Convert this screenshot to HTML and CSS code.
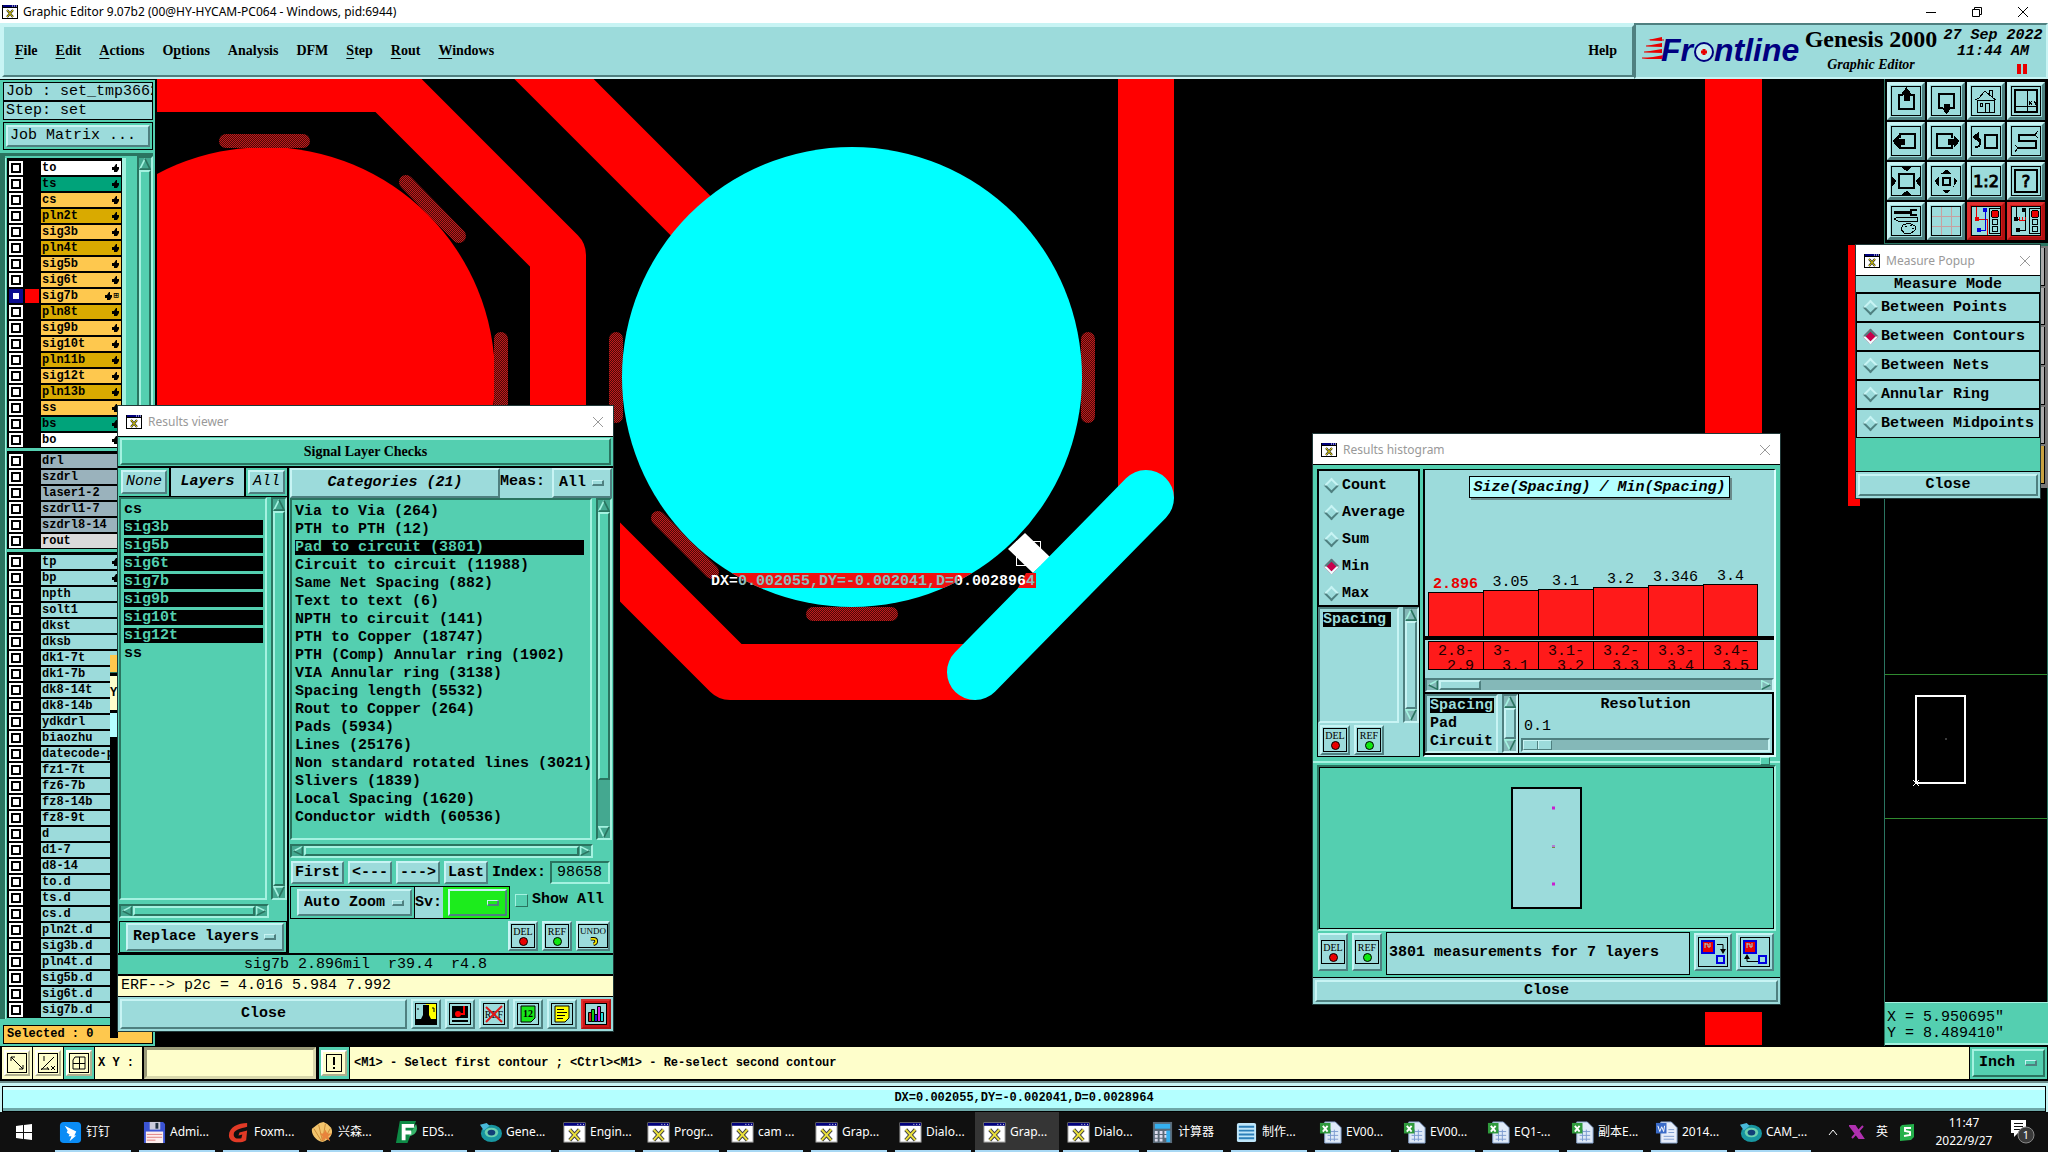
FILE: index.html
```html
<!DOCTYPE html>
<html lang="en">
<head>
    <title>Graphic Editor 9.07b2</title>
    <meta charset="utf-8">
    <link rel="stylesheet" href="styles.css">
</head>
<body>
    <!-- shared icons -->
    <svg class="defs" width="0" height="0">
        <symbol id="i-app" viewBox="0 0 16 14">
            <rect width="16" height="14" fill="#000"/><rect x="1" y="3" width="14" height="10" fill="#fff"/>
            <rect x="1" y="0" width="14" height="2" fill="#00007c"/><path d="M10 1h1M12 1h1M14 1h1" stroke="#fff"/>
            <path d="M5 5l6 7M11 5l-6 7" stroke="#222" stroke-width="2"/><path d="M5 5l6 7M11 5l-6 7" stroke="#f0e000"/>
        </symbol>
        <symbol id="i-x" viewBox="0 0 10 10"><path d="M0 0l10 10M10 0L0 10" fill="none" stroke="currentColor"/></symbol>
        <symbol id="i-hand" viewBox="0 0 7 8"><path d="M4 0h1v3h2v2L5 8H2V6H0V3h2z"/></symbol>
        <symbol id="i-up" viewBox="0 0 14 14"><path d="M7 1L1 13h12z" class="tri"/><path d="M1 13L7 1" class="lit"/><path d="M7 1l6 12H1" class="dim"/></symbol>
        <symbol id="i-down" viewBox="0 0 14 14"><path d="M7 13L1 1h12z" class="tri"/><path d="M7 13L1 1h12" class="lit"/><path d="M7 13L13 1" class="dim"/></symbol>
        <symbol id="i-left" viewBox="0 0 14 14"><path d="M1 7L13 1v12z" class="tri"/><path d="M1 7L13 1" class="lit"/><path d="M1 7l12 6V1" class="dim"/></symbol>
        <symbol id="i-right" viewBox="0 0 14 14"><path d="M13 7L1 1v12z" class="tri"/><path d="M13 7L1 1v12" class="lit"/><path d="M13 7L1 13" class="dim"/></symbol>
        <symbol id="t-x" viewBox="0 0 24 24"><rect x="1" y="2" width="22" height="20" fill="#fff" stroke="#999"/><rect x="1" y="2" width="22" height="3" fill="#00007c"/><path d="M15 3.500h1M18 3.500h1M21 3.500h1" stroke="#fff"/><path d="M7 9l10 11M17 9L7 20" stroke="#444" stroke-width="4"/><path d="M7 9l10 11M17 9L7 20" stroke="#ece23a" stroke-width="2"/></symbol>
        <symbol id="t-ding" viewBox="0 0 24 24"><rect x="1" y="1" width="22" height="22" rx="4" fill="#0a8cf5"/><path d="M6 5l12 6-2 4h2l-7 6 2-5h-3l1-2-3-2 1-2z" fill="#fff"/></symbol>
        <symbol id="t-disk" viewBox="0 0 24 24"><path d="M1 1h20l2 2v20H1z" fill="#3b54d4"/><rect x="7" y="1" width="11" height="8" fill="#ccd"/><rect x="13" y="2" width="3" height="6" fill="#234"/><rect x="3" y="11" width="18" height="12" fill="#fdeeee"/><path d="M4 14h16M4 17h16M4 20h9" stroke="#e08080"/></symbol>
        <symbol id="t-fox" viewBox="0 0 24 24"><path d="M21 2c-9 0-19 4-19 13 0 8 12 9 18 5l1-10-8 2-1 3 4-1-1 4c-4 1-8 0-8-4 0-5 7-6 14-8z" fill="#e23a26"/></symbol>
        <symbol id="t-shell" viewBox="0 0 24 24"><path d="M12 22C4 20 0 13 1 8l4-3 4-3 4-1 4 2 4 4c3 6-1 12-9 15z" fill="#f2c46c"/><path d="M11 21L3 8M12 21L8 4M12 21l3-18M13 21l7-13" stroke="#c98a35"/><path d="M15 9l2 4h5l-4 3 2 5-5-3-4 3 1-5-3-3h4z" fill="#e8843c"/></symbol>
        <symbol id="t-eds" viewBox="0 0 24 24"><path d="M5 0h17L13 23H1z" fill="#0d8a45"/><path d="M22 3c3 8-2 12-8 13z" fill="#35b56a"/><path d="M9 20V5h11M9 12h8" fill="none" stroke="#fff" stroke-width="4"/></symbol>
        <symbol id="t-gen" viewBox="0 0 24 24"><ellipse cx="13" cy="13" rx="11" ry="9" fill="#1896a0"/><ellipse cx="13" cy="12" rx="7" ry="5" fill="#6bd0b0"/><ellipse cx="13" cy="12" rx="4" ry="3" fill="#123f78"/><path d="M1 4l7-2 3 3-6 5z" fill="#48b8d8"/></symbol>
        <symbol id="t-calc" viewBox="0 0 24 24"><rect x="2" y="1" width="20" height="22" fill="#5a6a78"/><rect x="4" y="3" width="16" height="5" fill="#35b0f0"/><path d="M4 12h3M9 12h3M4 16h3M9 16h3M4 20h3M9 20h3M14 12h3M14 16h3" stroke="#dde" stroke-width="3"/><path d="M18 10v12" stroke="#35b0f0" stroke-width="4"/></symbol>
        <symbol id="t-note" viewBox="0 0 24 24"><rect x="2" y="2" width="20" height="20" rx="2" fill="#bfe6fa"/><path d="M4 6h16M4 10h16M4 14h16M4 18h16" stroke="#2c7fb8" stroke-width="2"/></symbol>
        <symbol id="t-xls" viewBox="0 0 24 24"><path d="M6 1h11l6 6v16H6z" fill="#dfeaf8" stroke="#8aa6d0"/><path d="M9 11h11M9 15h11M9 19h11M12 9v12M16 9v12" stroke="#7c9cd0"/><rect x="1" y="2" width="11" height="11" fill="#2f9a3c"/><path d="M4 5l5 6M9 5l-5 6" stroke="#fff" stroke-width="2"/></symbol>
        <symbol id="t-doc" viewBox="0 0 24 24"><path d="M6 1h11l6 6v16H6z" fill="#e6edfa" stroke="#8aa6d0"/><path d="M14 9h6M14 12h6M9 16h11M9 19h11" stroke="#7c9cd0"/><rect x="1" y="2" width="11" height="11" fill="#3a6bc8"/><path d="M3 5l2 6 2-5 2 5 1-6" fill="none" stroke="#fff"/></symbol>
    </svg>

    <header class="titlebar">
        <svg class="app-icon"><use href="#i-app"/></svg>
        <span>Graphic Editor 9.07b2 (00@HY-HYCAM-PC064 - Windows, pid:6944)</span>
        <div class="win-ctl">
            <button aria-label="Minimize"><svg width="10" height="10"><path d="M0 5.500h10" stroke="#000"/></svg></button>
            <button aria-label="Restore"><svg width="10" height="10" fill="none" stroke="#000"><path d="M.5 2.500h7v7h-7zM2.500 2.500v-2h7v7h-2"/></svg></button>
            <button aria-label="Close"><svg width="10" height="10"><use href="#i-x"/></svg></button>
        </div>
    </header>

    <div class="top">
        <nav class="menubar">
            <button><u>F</u>ile</button>
            <button><u>E</u>dit</button>
            <button><u>A</u>ctions</button>
            <button>O<u>p</u>tions</button>
            <button>Analysis</button>
            <button>DFM</button>
            <button><u>S</u>tep</button>
            <button><u>R</u>out</button>
            <button><u>W</u>indows</button>
            <button class="help">Help</button>
        </nav>
        <div class="brand">
            <svg class="logo" width="160" height="40" viewBox="0 0 160 40">
                <g fill="#e80000"><path d="M6 9l14-3v4zM4 15l16-3v4zM2 21l18-3v4zM0 28l22-4v4z"/></g>
                <path d="M8 9h14M4 15h16M2 21h18M0 27h20" stroke="#e80000"/>
                <text x="19" y="30" class="logo-text">Fr</text>
                <circle cx="62" cy="21" r="9" fill="#c8eeee" stroke="#000080" stroke-width="2"/>
                <path d="M62 18v6M59 21h6" stroke="#e80000" stroke-width="3"/>
                <text x="72" y="30" class="logo-text">ntline</text>
            </svg>
            <div class="product">
                <strong>Genesis 2000</strong>
                <em>Graphic Editor</em>
            </div>
            <div class="clock">
                <span>27 Sep 2022</span>
                <span>11:44 AM</span>
                <svg width="12" height="10"><path d="M3 0v10M9 0v10" stroke="#e80000" stroke-width="4"/></svg>
            </div>
        </div>
    </div>

    <main class="work">
        <aside class="rail">
            <div class="job">Job : set_tmp3662</div>
            <div class="job">Step: set</div>
            <div class="matrix"><button>Job Matrix ...</button></div>
            <div class="layers">
                <div class="layer-frame" id="layers"></div>
                <div class="vscroll"><svg><use href="#i-up"/></svg><i></i></div>
            </div>
            <div class="selected">Selected : 0</div>
        </aside>

        <svg class="canvas" viewBox="157 79 1727 967" preserveAspectRatio="xMinYMin slice">
            <defs>
                <pattern id="hatch" width="2" height="2" patternUnits="userSpaceOnUse"><rect width="2" height="2" fill="#4a0808"/><path d="M0 0h1v1h-1zM1 1h1v1h-1z" fill="#c01c1c"/></pattern>
                <clipPath id="pad"><circle cx="852" cy="377" r="230"/></clipPath>
                <clipPath id="cut"><rect x="620" y="400" width="600" height="400"/></clipPath>
                <linearGradient id="ink" gradientUnits="userSpaceOnUse" x1="711" x2="1036" y1="0" y2="0">
                    <stop offset=".08" stop-color="#fff"/><stop offset=".08" stop-color="#8fbcbc"/>
                    <stop offset=".76" stop-color="#8fbcbc"/><stop offset=".76" stop-color="#fff"/>
                    <stop offset=".97" stop-color="#fff"/><stop offset=".97" stop-color="#8fbcbc"/>
                </linearGradient>
            </defs>
            <g class="trace">
                <polyline points="140,84 387,84 558,255 558,460"/>
                <polyline points="475,0 760,285"/>
                <polyline points="1146,60 1146,498"/>
                <polyline points="560,502 730,672 975,672" clip-path="url(#cut)"/>
            </g>
            <circle cx="265" cy="377" r="230" fill="#f00"/>
            <rect x="1705" y="79" width="57" height="966" fill="#f00"/>
            <rect x="1705" y="900" width="57" height="112"/>
            <rect x="1848" y="245" width="12" height="261" fill="#f00"/>
            <g class="thermal">
                <path d="M226 141h77M406 182l53 54M501 339v77M616 339v77M1088 339v77M658 518l54 54M813 614h78"/>
            </g>
            <circle cx="852" cy="377" r="230" fill="#0ff"/>
            <rect x="1016.500" y="541.500" width="24" height="24" fill="none" stroke="#fff"/>
            <path d="M1008 549l17-16 25 24-17 16z" fill="#fff"/>
            <path d="M1146 498L975 672" class="net"/>
            <rect x="711" y="573" width="325" height="15" fill="#f01010" clip-path="url(#pad)"/>
            <path d="M1036 573v15h-18l8-15z" fill="#f01010"/>
            <text x="711" y="585" class="measure" fill="url(#ink)">DX=0.002055,DY=-0.002041,D=0.0028964</text>
        </svg>

        <aside class="tools">
            <div class="tool-grid">
                <button aria-label="Pan up"><svg viewBox="0 0 30 30"><rect x=".5" y=".5" width="29" height="29"/><path d="M12 9H8v14h15V9h-4" stroke-width="2"/><path d="M15.500 2L11 8h2v6h5V8h2z" fill="#000"/></svg></button>
                <button aria-label="Pan down"><svg viewBox="0 0 30 30"><rect x=".5" y=".5" width="29" height="29"/><path d="M12 22H8V8h15v14h-4" stroke-width="2"/><path d="M15.500 27L11 22h2v-4h5v4h2z" fill="#000"/></svg></button>
                <button aria-label="Home"><svg viewBox="0 0 30 30"><rect x=".5" y=".5" width="29" height="29"/><path d="M4 14l4-2 6-7 8 7 3 2M6 14h17v12H6zM14 26v-9h4v9M9 17h2v3H9zM18 8V4h3v7" /></svg></button>
                <button aria-label="Window XY"><svg viewBox="0 0 30 30"><rect x=".5" y=".5" width="29" height="29"/><path d="M4 4h22v22H4z" stroke-width="2"/><path d="M16.500 4v22M4 20.500h22M18 15l3 4M21 15l-3 4M23 15l1 2 2-2M24 17v2"/></svg></button>
                <button aria-label="Pan left"><svg viewBox="0 0 30 30"><rect x=".5" y=".5" width="29" height="29"/><path d="M9 12V8h15v14H9v-4" stroke-width="2"/><path d="M2 15l5-5v3h6v5H7v3z" fill="#000"/></svg></button>
                <button aria-label="Pan right"><svg viewBox="0 0 30 30"><rect x=".5" y=".5" width="29" height="29"/><path d="M21 12V8H6v14h15v-4" stroke-width="2"/><path d="M28 15l-5-5v3h-6v5h6v3z" fill="#000"/></svg></button>
                <button aria-label="Previous view"><svg viewBox="0 0 30 30"><rect x=".5" y=".5" width="29" height="29"/><path d="M14 9h12v13H14zM4 21c7 1 7-10 1-10" stroke-width="2"/><path d="M2 11l5-4v8z" fill="#000"/></svg></button>
                <button aria-label="Serpentine"><svg viewBox="0 0 30 30"><rect x=".5" y=".5" width="29" height="29"/><path d="M24 9H8v6h17v7H7" stroke-width="2"/><path d="M24 9l3-4M24 9l3 3M7 22l-3-3M7 22l-3 4"/></svg></button>
                <button aria-label="Zoom out"><svg viewBox="0 0 30 30"><rect x=".5" y=".5" width="29" height="29"/><path d="M8 8h15v14H8z" stroke-width="2"/><path d="M11 1h9l-4 4zM11 29h9l-4-4zM1 11l4 4-4 5zM29 11l-4 4 4 5z" fill="#000"/></svg></button>
                <button aria-label="Zoom in"><svg viewBox="0 0 30 30"><rect x=".5" y=".5" width="29" height="29"/><path d="M12 12h7v7h-7z" stroke-width="2"/><path d="M12 7h7l-3-3zM12 24h7l-3 3zM7 12l-3 3 3 4zM23 12l3 3-3 4z" fill="#000"/></svg></button>
                <button aria-label="Scale"><svg viewBox="0 0 30 30"><rect x=".5" y=".5" width="29" height="29"/><text x="15" y="21" class="scale">1:2</text></svg></button>
                <button aria-label="Query"><svg viewBox="0 0 30 30"><rect x=".5" y=".5" width="29" height="29"/><path d="M4 4h22v22H4z" stroke-width="2"/><text x="15" y="21" class="scale">?</text></svg></button>
                <button aria-label="Tools"><svg viewBox="0 0 30 30"><rect x=".5" y=".5" width="29" height="29"/><path d="M3 6h16" stroke-width="3"/><path d="M26 4h-6v5h6" stroke-width="2"/><path d="M3 13l4-2h19v4H7zM12 19l6-2 6 3v4l-5 4-6-1-3-4zM14 20h2M19 19h2M21 22h2"/></svg></button>
                <button aria-label="Grid"><svg viewBox="0 0 30 30"><rect x=".5" y=".5" width="29" height="29"/><path d="M10.500 1v28M20.500 1v28M1 10.500h28M1 20.500h28" stroke="#c8a0a0"/></svg></button>
                <button class="hot" aria-label="Net analyzer"><svg viewBox="0 0 30 30"><rect x=".5" y=".5" width="29" height="29"/><path d="M5.500 1v12h11v16" stroke="#e80000"/><path d="M14.500 4v20h-6" stroke="#0000e0"/><circle cx="6" cy="13" r="2" fill="#e80000" stroke="#e80000"/><circle cx="14" cy="4" r="2" fill="#0000e0" stroke="#0000e0"/><circle cx="8" cy="24" r="2" fill="#0000e0" stroke="#0000e0"/><path d="M18.500 2.500h11v25h-11z"/><circle cx="24" cy="8" r="4" fill="#e80000"/><circle cx="24" cy="16" r="3"/><circle cx="24" cy="23" r="3"/></svg></button>
                <button class="hot" aria-label="Online checks"><svg viewBox="0 0 30 30"><rect x=".5" y=".5" width="29" height="29"/><path d="M5.500 1v12h3M14 4v20H8"/><path d="M8 14h6M8 11v3M11 11v3M14 11v3" stroke="#e80000"/><g fill="#000"><circle cx="5" cy="13" r="2"/><circle cx="13" cy="4" r="2"/><circle cx="7" cy="24" r="2"/></g><path d="M18.500 2.500h11v25h-11z"/><circle cx="24" cy="8" r="4" fill="#e80000"/><circle cx="24" cy="16" r="3"/><circle cx="24" cy="23" r="3"/></svg></button>
            </div>
            <div class="side-strip"><i></i><i></i><i></i><i></i><i></i><i class="gold"></i></div>
            <svg class="overview">
                <path d="M0 186.500h164M0 330.500h164" stroke="#2f8a2f"/>
                <rect x="31" y="208" width="49" height="87" fill="none" stroke="#fff" stroke-width="2"/>
                <path d="M28 292l6 6M34 292l-6 6" stroke="#fff"/><path d="M60 251h2" stroke="#777"/>
            </svg>
            <div class="coords"><span>X = 5.950695"</span><span>Y = 8.489410"</span></div>
        </aside>
    </main>

    <div class="prompt">
        <button class="pbtn" aria-label="Snap"><svg viewBox="0 0 20 20"><rect x=".5" y=".5" width="19" height="19"/><path d="M4 4l12 12M4 8V4h4M16 12v4h-4"/></svg></button>
        <button class="pbtn" aria-label="Angle"><svg viewBox="0 0 20 20"><rect x=".5" y=".5" width="19" height="19"/><path d="M3 17L16 4M3 16h8M6 3v5M13 13l4 4M17 13l-4 4M9 14l2 3"/></svg></button>
        <button class="pbtn green" aria-label="Grid snap"><svg viewBox="0 0 20 20"><rect x=".5" y=".5" width="19" height="19"/><path d="M6 4h10v12H4V7zM10.500 4v12M4 10.500h12"/></svg></button>
        <label for="xy">X Y :</label>
        <input id="xy" type="text">
        <button class="pbtn green" aria-label="Alert"><svg viewBox="0 0 20 20"><rect x="2.500" y="1.500" width="15" height="17"/><path d="M10 4v8M10 14v2" stroke-width="2"/></svg></button>
        <div class="message">&lt;M1&gt; - Select first contour ; &lt;Ctrl&gt;&lt;M1&gt; - Re-select second contour</div>
        <div class="units"><div class="option teal"><select aria-label="Units"><option>Inch</option></select><i></i></div></div>
    </div>
    <div class="status"><div>DX=0.002055,DY=-0.002041,D=0.0028964</div></div>

    <!-- leftovers of a window under the viewer -->
    <div class="ghost"><b></b><span>Y</span><i></i></div>

    <section class="win viewer">
        <header><svg class="app-icon"><use href="#i-app"/></svg><span>Results viewer</span><button aria-label="Close window"><svg width="10" height="10"><use href="#i-x"/></svg></button></header>
        <h2>Signal Layer Checks</h2>
        <div class="viewer-cols">
            <div class="vleft">
                <div class="vhead">
                    <div class="cell"><button class="slant">None</button></div>
                    <strong>Layers</strong>
                    <div class="cell"><button class="slant">All</button></div>
                </div>
                <div class="listbox">
                    <ul>
                        <li>cs</li>
                        <li class="on">sig3b</li>
                        <li class="on">sig5b</li>
                        <li class="on">sig6t</li>
                        <li class="on">sig7b</li>
                        <li class="on">sig9b</li>
                        <li class="on">sig10t</li>
                        <li class="on">sig12t</li>
                        <li>ss</li>
                    </ul>
                    <div class="vscroll"><svg><use href="#i-up"/></svg><i></i><svg><use href="#i-down"/></svg></div>
                </div>
                <div class="hscroll"><svg><use href="#i-left"/></svg><i></i><svg><use href="#i-right"/></svg></div>
                <div class="replace"><div class="option"><select aria-label="Layer action"><option>Replace layers</option></select><i></i></div></div>
            </div>
            <div class="vright">
                <div class="chead">
                    <button>Categories (21)</button>
                    <label for="meas">Meas:</label>
                    <div class="option"><select id="meas"><option>All</option></select><i></i></div>
                </div>
                <div class="listbox">
                    <ul>
                        <li>Via to Via (264)</li>
                        <li>PTH to PTH (12)</li>
                        <li class="on">Pad to circuit (3801)</li>
                        <li>Circuit to circuit (11988)</li>
                        <li>Same Net Spacing (882)</li>
                        <li>Text to text (6)</li>
                        <li>NPTH to circuit (141)</li>
                        <li>PTH to Copper (18747)</li>
                        <li>PTH (Comp) Annular ring (1902)</li>
                        <li>VIA Annular ring (3138)</li>
                        <li>Spacing length (5532)</li>
                        <li>Rout to Copper (264)</li>
                        <li>Pads (5934)</li>
                        <li>Lines (25176)</li>
                        <li>Non standard rotated lines (3021)</li>
                        <li>Slivers (1839)</li>
                        <li>Local Spacing (1620)</li>
                        <li>Conductor width (60536)</li>
                    </ul>
                    <div class="vscroll part"><svg><use href="#i-up"/></svg><i></i><b></b><svg><use href="#i-down"/></svg></div>
                </div>
                <div class="hscroll"><svg><use href="#i-left"/></svg><i></i><svg><use href="#i-right"/></svg></div>
                <div class="nav">
                    <button>First</button><button>&lt;---</button><button>---&gt;</button><button>Last</button>
                    <label for="idx">Index:</label><input id="idx" type="text" value="98658">
                </div>
                <div class="zoomrow">
                    <div class="boxed"><div class="option"><select aria-label="Zoom mode"><option>Auto Zoom</option></select><i></i></div></div>
                    <div class="boxed sv"><label for="sv">Sv:</label><div class="option lime"><select id="sv"><option></option></select><i></i></div></div>
                    <label class="show"><input type="checkbox">Show All</label>
                </div>
                <div class="icons">
                    <button class="ib mark">DEL</button>
                    <button class="ib mark go">REF</button>
                    <button class="ib mark undo">UNDO<svg viewBox="0 0 10 10"><path d="M2 2h3c4 0 4 5 0 6" fill="none" stroke="#000" stroke-width="4"/><path d="M2 2h3c4 0 4 5 0 6" fill="none" stroke="#f0e000" stroke-width="2"/></svg></button>
                </div>
            </div>
        </div>
        <div class="note">sig7b 2.896mil&nbsp; r39.4&nbsp; r4.8</div>
        <div class="erf">ERF--&gt; p2c = 4.016 5.984 7.992</div>
        <div class="closerow">
            <button class="wide">Close</button>
            <button class="ib" aria-label="Compare"><svg viewBox="0 0 22 22"><rect width="11" height="22" fill="#9cdbdb"/><rect x="11" width="11" height="22" fill="#ff0"/><path d="M8 2h6v10l2 4h6v6H0v-6h6l2-4z"/><path d="M2 6h2M17 5h2v4" stroke="#000" fill="none"/><rect x=".5" y=".5" width="21" height="21" fill="none" stroke="#000"/></svg></button>
            <button class="ib" aria-label="Capture"><svg viewBox="0 0 22 22"><rect x=".5" y=".5" width="21" height="21" fill="none" stroke="#000"/><rect x="3" y="3" width="16" height="12"/><path d="M3 18h16" stroke="#000" stroke-width="2"/><circle cx="9" cy="11" r="3" fill="#f00"/><path d="M12 11h3V3" stroke="#f00" stroke-width="2" fill="none"/></svg></button>
            <button class="ib" aria-label="No reference"><svg viewBox="0 0 22 22"><rect x=".5" y=".5" width="21" height="21" fill="none" stroke="#000"/><text x="11" y="15" class="tiny">REF</text><path d="M3 4l16 15M19 3L3 19" stroke="#e01818" stroke-width="2"/></svg></button>
            <button class="ib" aria-label="Numbers"><svg viewBox="0 0 22 22"><rect x=".5" y=".5" width="21" height="21" fill="none" stroke="#000"/><path d="M4 3h14v12l-4 4H4z" fill="#18e818" stroke="#000"/><text x="11" y="14" class="tiny bold">12</text></svg></button>
            <button class="ib" aria-label="Report"><svg viewBox="0 0 22 22"><rect x=".5" y=".5" width="21" height="21" fill="none" stroke="#000"/><path d="M4 3h14v12l-4 4H4z" fill="#ff0" stroke="#000"/><path d="M6 6.500h7M6 9.500h10M6 12.500h8M6 15.500h6" stroke="#000"/></svg></button>
            <button class="ib hot" aria-label="Histogram"><svg viewBox="0 0 22 22"><rect x=".5" y=".5" width="21" height="21" fill="none" stroke="#000"/><g stroke="#000"><path d="M3.500 9.500h3v9h-3z" fill="#d02020"/><path d="M6.500 6.500h3v12h-3z" fill="#10d010"/><path d="M9.500 11.500h3v7h-3z" fill="#2020e0"/><path d="M12.500 3.500h3v15h-3z" fill="#e020e0"/><path d="M15.500 9.500h3v9h-3z" fill="#20e0e0"/></g></svg></button>
        </div>
    </section>

    <section class="win hist">
        <header><svg class="app-icon"><use href="#i-app"/></svg><span>Results histogram</span><button aria-label="Close window"><svg width="10" height="10"><use href="#i-x"/></svg></button></header>
        <div class="hist-top">
            <div class="hleft">
                <div class="radios">
                    <label><input type="radio" name="stat">Count</label>
                    <label><input type="radio" name="stat">Average</label>
                    <label><input type="radio" name="stat">Sum</label>
                    <label><input type="radio" name="stat" checked>Min</label>
                    <label><input type="radio" name="stat">Max</label>
                </div>
                <div class="listbox">
                    <ul><li class="on">Spacing</li></ul>
                    <div class="vscroll"><svg><use href="#i-up"/></svg><i></i><svg><use href="#i-down"/></svg></div>
                </div>
                <div class="icons">
                    <button class="ib mark">DEL</button>
                    <button class="ib mark go">REF</button>
                </div>
            </div>
            <div class="hright">
                <div class="chart">
                    <h3>Size(Spacing) / Min(Spacing)</h3>
                    <div class="bars" id="bars"></div>
                    <div class="bins" id="bins"></div>
                </div>
                <div class="hscroll part"><svg><use href="#i-left"/></svg><i></i><b></b><svg><use href="#i-right"/></svg></div>
                <div class="res">
                    <div class="listbox">
                        <ul><li class="on">Spacing</li><li>Pad</li><li>Circuit</li></ul>
                        <div class="vscroll"><svg><use href="#i-up"/></svg><i></i><svg><use href="#i-down"/></svg></div>
                    </div>
                    <div class="slider">
                        <label for="reso">Resolution</label>
                        <span>0.1</span>
                        <input id="reso" type="range" min="0" max="10" step="0.1" value="0">
                    </div>
                </div>
            </div>
        </div>
        <div class="sash"><i></i></div>
        <div class="preview">
            <svg width="71" height="122" viewBox="0 0 71 122"><rect x="1" y="1" width="69" height="120" fill="#9cdbdb" stroke="#000" stroke-width="2"/><path d="M41 21h3M41 97h3" stroke="#c81ed0" stroke-width="3"/><path d="M41 59h3" stroke="#c81ed0"/><path d="M41 60.500h3" stroke="#7a8a4a"/></svg>
        </div>
        <div class="hist-foot">
            <button class="ib mark">DEL</button>
            <button class="ib mark go">REF</button>
            <div class="count">3801 measurements for 7 layers</div>
            <button class="ib big" aria-label="Shrink"><svg viewBox="0 0 30 30"><rect x=".5" y=".5" width="29" height="29" fill="none" stroke="#000"/><rect x="4" y="4" width="12" height="12" fill="#e80000" stroke="#0000e0" stroke-width="2"/><path d="M7 6v5M7 7h3v3h2V6" fill="none" stroke="#9cdbdb"/><path d="M19 7.500h6v6" fill="none" stroke="#000"/><path d="M22 12h6l-3 5z"/><rect x="19" y="19" width="7" height="7" fill="#9cdbdb" stroke="#0000e0" stroke-width="2"/></svg></button>
            <button class="ib big" aria-label="Grow"><svg viewBox="0 0 30 30"><rect x=".5" y=".5" width="29" height="29" fill="none" stroke="#000"/><rect x="4" y="4" width="12" height="12" fill="#e80000" stroke="#0000e0" stroke-width="2"/><path d="M7 6v5M7 7h3v3h2V6" fill="none" stroke="#9cdbdb"/><path d="M19 24.500H7v-5" fill="none" stroke="#000"/><path d="M4 22h6l-3-5z"/><rect x="19" y="19" width="7" height="7" fill="#9cdbdb" stroke="#0000e0" stroke-width="2"/></svg></button>
        </div>
        <div class="closebar"><button class="wide">Close</button></div>
    </section>

    <section class="win popup">
        <header><svg class="app-icon"><use href="#i-app"/></svg><span>Measure Popup</span><button aria-label="Close window"><svg width="10" height="10"><use href="#i-x"/></svg></button></header>
        <h3>Measure Mode</h3>
        <div class="modes">
            <label><input type="radio" name="mode">Between Points</label>
            <label><input type="radio" name="mode" checked>Between Contours</label>
            <label><input type="radio" name="mode">Between Nets</label>
            <label><input type="radio" name="mode">Annular Ring</label>
            <label><input type="radio" name="mode">Between Midpoints</label>
        </div>
        <div class="closebar"><button class="wide">Close</button></div>
    </section>

    <footer class="taskbar">
        <button class="start" aria-label="Start"><svg width="16" height="16"><path d="M0 2l7-1v7H0zM8 1l8-1v8H8zM0 9h7v6l-7-1zM8 9h8v7l-8-1z" fill="#fff"/></svg></button>
        <div class="tasks" id="tasks"></div>
        <div class="tray">
            <svg width="10" height="8"><path d="M1 7l4-5 4 5" fill="none" stroke="#fff"/></svg>
            <svg width="16" height="16"><path d="M1 2h5l8 12h-4zM14 2L3 14" fill="#b030b0" stroke="#b030b0" stroke-width="2"/></svg>
            <span>英</span>
            <svg width="16" height="18"><path d="M3 2l12-1v13l-3 3-11 1V4z" fill="#25b04b"/><path d="M12 5H6v3l5 1v3l-6 1" fill="none" stroke="#fff" stroke-width="2"/></svg>
            <time><span>11:47</span><span>2022/9/27</span></time>
            <svg width="26" height="28"><path d="M1 2h15v13H8l-4 4v-4H1z" fill="#fff"/><path d="M4 5.500h9M4 8.500h9M4 11.500h6" stroke="#101010"/><circle cx="16" cy="17" r="8" fill="#3a3a3a" stroke="#888"/><text x="16" y="21" class="badge">1</text></svg>
        </div>
    </footer>

    <script src="script.js"></script>
</body>
</html>
```
FILE: styles.css
```css
* { box-sizing: border-box; }

:root {
    --cyan: #9cdbdb;
    --cyan-lit: #c8f4f4;
    --cyan-dim: #4f8080;
    --teal: #54cfb0;
    --teal-lit: #a4f2e0;
    --teal-dim: #2a7460;
    --cream: #fefecb;
    --mono: "Liberation Mono", "Noto Sans CJK SC", monospace;
    --serif: "Liberation Serif", "Noto Sans CJK SC", serif;
    --ui: "Noto Sans", "Noto Sans CJK SC", sans-serif;
}

body {
    margin: 0;
    height: 100vh;
    overflow: hidden;
    display: flex;
    flex-direction: column;
    background: #000;
    color: #000;
    font: bold 15px/18px var(--mono);
}

button, select, input {
    font: inherit;
    color: inherit;
    margin: 0;
    padding: 0;
    border: 0;
    background: none;
}
button svg, header svg { display: block; }
ul, h2, h3 { margin: 0; padding: 0; list-style: none; font: inherit; }
.defs { position: absolute; }
.tri { fill: none; }
.lit { fill: none; stroke: var(--teal-lit); stroke-width: 2; }
.dim { fill: none; stroke: var(--teal-dim); stroke-width: 2; }
.tiny { font: 10px var(--serif); text-anchor: middle; }
.tiny.bold { font-weight: bold; }
.app-icon { width: 16px; height: 14px; flex: none; }

/* window title */
.titlebar {
    display: flex;
    align-items: center;
    height: 23px;
    flex: none;
    padding-left: 2px;
    gap: 5px;
    background: #fff;
    font: 12px/20px var(--ui);
}
.win-ctl { margin-left: auto; display: flex; gap: 16px; padding-right: 10px; }
.win-ctl button { width: 30px; display: flex; justify-content: center; }

/* menu and brand */
.top { display: flex; height: 56px; flex: none; background: var(--cyan-lit); }
.menubar {
    flex: 1;
    display: flex;
    align-items: center;
    gap: 18px;
    margin: 2px 0 2px 2px;
    padding: 0 15px 0 11px;
    background: var(--cyan);
    border: 2px solid;
    border-color: var(--cyan-lit) var(--cyan-dim) var(--cyan-dim) var(--cyan-lit);
    font: bold 14px/18px var(--serif);
}
.menubar u { text-underline-offset: 3px; }
.menubar .help { margin-left: auto; }
.brand {
    width: 414px;
    display: flex;
    padding-left: 6px;
    background: var(--cyan);
    border: 2px solid;
    border-color: var(--cyan-dim) var(--cyan-lit) var(--cyan-lit) var(--cyan-dim);
}
.logo { margin-top: 6px; flex: none; overflow: visible; }
.logo-text { font: italic bold 32px "Liberation Sans", sans-serif; fill: #000080; }
.product { display: flex; flex-direction: column; align-items: center; width: 138px; flex: none; }
.product strong { font: bold 24px/28px var(--serif); white-space: nowrap; }
.product em { font: italic bold 14px/24px var(--serif); }
.clock { flex: 1; display: flex; flex-direction: column; align-items: center; font-style: italic; line-height: 16px; padding-top: 3px; white-space: nowrap; }
.clock svg { margin: 4px 18px 0 auto; }

.work { flex: 1; min-height: 0; display: flex; }

/* layer rail */
.rail {
    width: 155px;
    flex: none;
    display: flex;
    flex-direction: column;
    padding: 2px 2px 2px 3px;
    background: var(--teal);
    border-top: 1px solid #000;
}
.job {
    height: 19px;
    flex: none;
    padding-left: 2px;
    overflow: hidden;
    white-space: nowrap;
    background: var(--cyan);
    border: 1px solid #000;
    font-weight: normal;
    line-height: 18px;
}
.matrix { margin: 2px 0 3px; padding: 2px; border: 1px solid #000; }
.matrix button {
    width: 100%;
    text-align: left;
    padding-left: 2px;
    background: var(--cyan);
    border: 2px solid;
    border-color: var(--cyan-lit) var(--cyan-dim) var(--cyan-dim) var(--cyan-lit);
    font-weight: normal;
    white-space: nowrap;
}
.layers { flex: 1; min-height: 0; display: flex; justify-content: space-between; border-top: 3px solid var(--teal-dim); margin-left: -3px; border-left: 5px solid var(--teal-dim); }
.layer-frame { width: 121px; margin-top: 2px; border-left: 1px solid var(--teal-lit); padding-left: 1px; border-right: 4px solid var(--teal-lit); overflow: hidden; }
.group { background: #000; padding: 2px 1px 1px 2px; margin-bottom: 3px; border-top: 1px solid #000; }
.layer { display: flex; align-items: center; height: 14px; margin-bottom: 2px; font-size: 12px; line-height: 14px; }
.group .layer:last-child { margin-bottom: 0; }
.layer input {
    appearance: none;
    width: 14px;
    height: 14px;
    flex: none;
    background: #fff;
    border: 2px solid #fff;
    outline: 2px solid #000;
    outline-offset: -4px;
}
.layer input:checked { border-color: #0c0c90; outline-color: #0c0c90; }
.layer .swatch { width: 14px; height: 14px; margin: 0 2px; flex: none; }
.layer .name { flex: 1; display: flex; align-items: center; padding: 0 2px 0 1px; white-space: nowrap; height: 14px; }
.layer .name svg { width: 7px; height: 8px; margin-left: auto; flex: none; }
.layer .grid { font-size: 9px; margin-left: 2px; }
.white { background: #fff; }
.mask { background: #00a37a; }
.signal { background: #fec84e; }
.plane { background: #d9aa00; }
.drill { background: #9ab2bc; }
.rout { background: #dadada; }
.misc { background: var(--cyan); }
.selected { height: 19px; flex: none; margin-top: 6px; padding-left: 3px; background: #fec84e; border: 1px solid #000; font-size: 12px; line-height: 16px; }

/* scrollbars */
.vscroll, .hscroll { display: flex; background: var(--teal-mid, #44a890); border: 2px solid; border-color: var(--sb-dim, var(--teal-dim)) var(--sb-lit, var(--teal-lit)) var(--sb-lit, var(--teal-lit)) var(--sb-dim, var(--teal-dim)); flex: none; }
.vscroll { width: 16px; flex-direction: column; }
.hscroll { height: 14px; }
.vscroll svg { width: 12px; height: 12px; flex: none; }
.hscroll svg { width: 12px; height: 10px; flex: none; }
.vscroll i, .hscroll i { flex: 1; background: var(--sb, var(--teal)); border: 2px solid; border-color: var(--sb-lit, var(--teal-lit)) var(--sb-dim, var(--teal-dim)) var(--sb-dim, var(--teal-dim)) var(--sb-lit, var(--teal-lit)); }
.vscroll.part b { height: 46px; }
.hscroll.part i { flex: none; width: 42px; }
.hscroll.part b { flex: 1; }

/* drawing area */
.canvas { flex: 1; min-width: 0; height: 100%; margin-left: 2px; display: block; }
.trace { fill: none; stroke: #f00; stroke-width: 56; stroke-linejoin: round; }
.thermal { fill: none; stroke: url(#hatch); stroke-width: 14; stroke-linecap: round; }
.net { stroke: #0ff; stroke-width: 56; stroke-linecap: round; }
.measure { font: bold 15px var(--mono); }

/* right side */
.tools { width: 164px; flex: none; display: flex; flex-direction: column; border-left: 1px solid var(--teal-dim); }
.tool-grid { display: grid; grid-template-columns: repeat(4, 38px); gap: 2px; padding: 3px 2px; border-bottom: 3px solid var(--teal-dim); }
.tool-grid button {
    height: 38px;
    padding: 1px;
    background: var(--cyan);
    border: 3px solid;
    border-color: var(--cyan-lit) var(--cyan-dim) var(--cyan-dim) var(--cyan-lit);
}
.tool-grid svg { width: 30px; height: 30px; fill: none; stroke: #000; shape-rendering: crispEdges; }
.tool-grid .hot, .ib.hot { border-color: #e03030 #b01010 #b01010 #e03030; background: #d01818; }
.tool-grid .hot svg, .ib.hot svg { background: var(--cyan); }
.scale { font: 16px "DejaVu Sans", sans-serif; text-anchor: middle; fill: #000; }
.side-strip { width: 8px; height: 242px; flex: none; margin-left: auto; display: flex; flex-direction: column; gap: 2px; background: #777; padding: 2px 3px 4px 0; }
.side-strip i { flex: 1; background: #aaa; border-right: 1px solid #000; border-bottom: 1px solid #000; }
.side-strip .gold { background: #c8a040; }
.overview { flex: 1; min-height: 0; width: 100%; border-right: 1px solid var(--teal-dim); }
.coords { height: 43px; flex: none; margin-bottom: 1px; padding: 7px 2px 5px; display: flex; flex-direction: column; background: var(--teal); font-weight: normal; line-height: 16px; border-top: 1px solid var(--teal-lit); border-bottom: 2px solid var(--teal-lit); }

/* prompt line */
.prompt { display: flex; height: 35px; flex: none; gap: 1px; padding: 1px 1px 2px 2px; background: #000; font-size: 12px; line-height: 32px; }
.pbtn { width: 30px; padding: 2px; background: var(--cream); display: flex; align-items: center; justify-content: center; }
.pbtn svg { width: 26px; height: 26px; padding: 1px; fill: none; stroke: #000; background: var(--cream); border: 2px solid; border-color: #fff #b0b090 #b0b090 #fff; }
.pbtn.green { background: var(--teal); }
.prompt label { width: 47px; padding-left: 3px; background: var(--cream); white-space: nowrap; }
.prompt input { width: 172px; margin: 0 2px 0 1px; padding: 0 4px; background: var(--cream); border: 3px solid; border-color: #9a9a78 #d8d8ac #d8d8ac #9a9a78; }
.message { flex: 1; padding-left: 4px; background: var(--cream); }
.units { width: 77px; padding: 2px; background: var(--teal); font-size: 15px; }

/* option menus */
.option {
    display: flex;
    align-items: center;
    padding: 0 6px 0 5px;
    background: var(--cyan);
    border: 2px solid;
    border-color: var(--cyan-lit) var(--cyan-dim) var(--cyan-dim) var(--cyan-lit);
}
.option select { appearance: none; flex: 1; min-width: 0; outline: 0; }
.option i { width: 12px; height: 6px; flex: none; background: inherit; border: 2px solid; border-color: var(--cyan-lit) var(--cyan-dim) var(--cyan-dim) var(--cyan-lit); border-width: 1px 2px 2px 1px; }
.option.teal { height: 100%; background: var(--teal); border-color: var(--teal-lit) var(--teal-dim) var(--teal-dim) var(--teal-lit); }
.option.lime { background: #1cec1c; }

/* status line */
.status { height: 31px; flex: none; padding: 3px 2px 2px; background: var(--cyan-lit); border-top: 2px solid #6a8a88; }
.status div { height: 26px; background: #b4ffff; border: 1px solid #000; box-shadow: inset 0 -3px #6ea8a8, inset 0 3px #dcffff; text-align: center; font-size: 12px; line-height: 22px; }

/* floating windows */
.win { position: absolute; display: flex; flex-direction: column; background: var(--teal); outline: 1px solid #203838; }
.win header { display: flex; align-items: center; height: 31px; flex: none; gap: 6px; padding: 2px 10px 0 8px; background: #fff; color: #999; font: 12px/20px var(--ui); border-bottom: 1px solid #000; }
.win header button { margin-left: auto; }
.wide, .chead button {
    flex: 1;
    background: var(--cyan);
    border: 2px solid;
    border-color: var(--cyan-lit) var(--cyan-dim) var(--cyan-dim) var(--cyan-lit);
}
.closebar { display: flex; height: 27px; flex: none; padding: 2px; background: var(--cyan); border-top: 1px solid #000; }
.listbox { flex: 1; min-height: 0; display: flex; gap: 4px; }
.listbox ul { flex: 1; min-width: 0; overflow: hidden; padding: 2px 6px 0 3px; border: 2px solid; border-color: var(--teal-dim) var(--teal-lit) var(--teal-lit) var(--teal-dim); white-space: nowrap; }
.listbox li { height: 15px; line-height: 15px; margin-bottom: 3px; }
.listbox .on { background: #000; color: var(--teal); }
.ib { width: 30px; height: 30px; padding: 2px; flex: none; background: var(--cyan); border: 2px solid; border-color: var(--cyan-lit) var(--cyan-dim) var(--cyan-dim) var(--cyan-lit); }
.ib svg { width: 22px; height: 22px; display: block; }
.icons { display: flex; gap: 4px; }

/* DEL / REF buttons: framed word over a coloured dot */
.mark {
    display: flex;
    flex-direction: column;
    align-items: center;
    justify-content: center;
    font: 10px/11px var(--serif);
    position: relative;
}
.mark::before { content: ""; position: absolute; width: 22px; height: 22px; border: 1px solid #000; }
.mark::after { content: ""; width: 7px; height: 7px; border: 1px solid #000; border-radius: 50%; background: #e80000; }
.mark.go::after { background: #10e810; }
.mark.undo { width: 34px; font-size: 9px; }
.mark.undo::before { width: 28px; }
.mark.undo::after { display: none; }
.mark.undo svg { width: 9px; height: 9px; }

/* results viewer */
.viewer { left: 118px; top: 406px; width: 495px; height: 625px; }
.viewer h2 { height: 27px; flex: none; margin: 1px 2px 1px; border: 2px solid; border-color: var(--teal-lit) var(--teal-dim) var(--teal-dim) var(--teal-lit); font: bold 14px/23px var(--serif); text-align: center; }
.viewer-cols { flex: 1; min-height: 0; display: flex; border-top: 2px solid #000; border-bottom: 2px solid #000; }
.vleft { width: 171px; display: flex; flex-direction: column; border-right: 2px solid #000; padding-left: 1px; }
.vhead { display: flex; height: 29px; flex: none; background: #000; gap: 2px; padding-bottom: 1px; }
.vhead .cell { padding: 2px; background: var(--teal); display: flex; }
.vhead strong { flex: 1; background: var(--cyan); text-align: center; font-style: italic; line-height: 27px; }
.slant { font: italic 15px/20px var(--mono); padding: 0 3px; background: var(--cyan); border: 2px solid; border-color: var(--cyan-lit) var(--cyan-dim) var(--cyan-dim) var(--cyan-lit); }
.vleft .listbox ul { padding: 3px 2px 0 3px; }
.vleft .hscroll { width: 150px; margin: 4px 0 3px; }
.replace { height: 32px; border: 1px solid #000; padding: 1px 2px 1px 6px; display: flex; }
.replace .option { flex: 1; }
.vright { flex: 1; min-width: 0; display: flex; flex-direction: column; padding: 0 1px; }
.chead { display: flex; height: 30px; flex: none; background: var(--cyan); }
.chead button { font-style: italic; }
.chead label { line-height: 28px; padding-right: 7px; }
.chead .option { width: 60px; }
.vright .listbox ul { padding-top: 4px; }
.vright .hscroll { width: 303px; margin: 4px 0 3px; }
.nav { display: flex; height: 23px; flex: none; gap: 4px; padding-left: 1px; }
.nav button { padding: 0 2px; background: var(--cyan); border: 2px solid; border-color: var(--cyan-lit) var(--cyan-dim) var(--cyan-dim) var(--cyan-lit); }
.nav label { line-height: 23px; }
.nav input { flex: 1; min-width: 0; margin-right: 2px; padding-left: 5px; font-weight: normal; border: 2px solid; border-color: var(--teal-dim) var(--teal-lit) var(--teal-lit) var(--teal-dim); }
.zoomrow { display: flex; height: 33px; flex: none; margin: 2px 0; }
.boxed { display: flex; border: 1px solid #000; padding: 2px; }
.boxed:first-child { width: 125px; padding-left: 6px; }
.boxed .option { flex: 1; }
.sv { background: linear-gradient(90deg, var(--cyan) 28px, #1cec1c 28px); width: 95px; padding-left: 0; border-left: 0; line-height: 28px; }
.sv .option { margin-left: 6px; }
.show { display: flex; align-items: center; gap: 4px; height: 28px; margin-left: 5px; white-space: nowrap; }
.show input { appearance: none; width: 13px; height: 13px; border: 1px solid; border-color: var(--teal-lit) var(--teal-dim) var(--teal-dim) var(--teal-lit); }
.vright .icons { justify-content: flex-end; height: 32px; padding-right: 2px; }
.note { height: 21px; flex: none; text-align: center; font-weight: normal; line-height: 20px; border-bottom: 2px solid #000; }
.erf { height: 21px; flex: none; padding-left: 3px; background: var(--cream); font-weight: normal; line-height: 20px; border-bottom: 1px solid #000; }
.closerow { height: 34px; flex: none; display: flex; gap: 4px; padding: 2px; background: var(--cyan); }

/* results histogram */
.hist { left: 1313px; top: 434px; width: 467px; height: 570px; --sb: var(--cyan); --sb-lit: var(--cyan-lit); --sb-dim: var(--cyan-dim); --teal-mid: #84b8b8; }
.hist .lit { stroke: var(--cyan-lit); }
.hist .hist-top { display: flex; height: 288px; flex: none; margin: 4px 4px 0; gap: 3px; }
.hist .listbox ul { border-color: var(--cyan-dim) var(--cyan-lit) var(--cyan-lit) var(--cyan-dim); }
.hist .listbox .on { color: var(--cyan); }
.hleft { width: 103px; display: flex; flex-direction: column; background: var(--cyan); border: 1px solid #000; }
.radios { height: 137px; flex: none; padding: 1px 0 0 7px; border: 1px solid #000; border-width: 1px 1px 2px; }
.radios label { display: flex; align-items: center; height: 27px; gap: 5px; }
input[type=radio] { appearance: none; width: 11px; height: 11px; flex: none; transform: rotate(45deg); border: 2px solid; border-color: var(--cyan-lit) var(--cyan-dim) var(--cyan-dim) var(--cyan-lit); }
input[type=radio]:checked { background: #c8004c; border-color: var(--cyan-dim) #f0ffff #f0ffff var(--cyan-dim); }
.hleft .listbox ul { padding-top: 3px; }
.hleft .icons { height: 33px; padding: 2px; }
.hright {
    flex: 1;
    min-width: 0;
    display: flex;
    flex-direction: column;
    background: var(--cyan);
    border: 2px solid;
    border-color: #000 #dff #dff #000;
    border-width: 1px 2px 2px;
}
.chart { flex: 1; display: flex; flex-direction: column; }
.chart h3 { align-self: center; margin-top: 6px; padding: 2px 3px 0; background: #b4ffff; border: 1px solid #000; box-shadow: 2px 2px #6a8a8a; font-style: italic; line-height: 18px; white-space: nowrap; }
.bars { flex: 1; display: flex; align-items: flex-end; padding-left: 3px; border-bottom: 4px solid #000; font-weight: normal; line-height: 12px; }
.bar { width: 55px; text-align: center; white-space: nowrap; }
.bar i, .bins span { display: block; background: #ff1a1a; border: 1px solid #000; border-right-width: 0; }
.bar i { border-bottom: 0; margin-top: 1px; }
.bar:last-child i, .bins span:last-child { border-right-width: 1px; }
.bar.low { color: #e80000; font-weight: bold; }
.bins { display: flex; height: 38px; flex: none; padding: 1px 0 8px 3px; font-weight: normal; line-height: 15px; color: #200; }
.bins span { width: 55px; padding: 2px 0 0 9px; }
.bins b { font-weight: normal; display: block; padding-left: 9px; }
.res { display: flex; height: 63px; flex: none; border-top: 2px solid #000; border-bottom: 2px solid #000; }
.res .listbox { flex: none; width: 93px; }
.res .listbox ul { padding-right: 2px; }
.slider { flex: 1; border-left: 1px solid #000; border-right: 2px solid #000; padding: 2px 2px 0; display: flex; flex-direction: column; }
.slider label { text-align: center; }
.slider span { font-weight: normal; padding: 4px 3px 2px; }
.slider input { appearance: none; width: 100%; height: 14px; background: #84b8b8; border: 2px solid; border-color: var(--cyan-dim) var(--cyan-lit) var(--cyan-lit) var(--cyan-dim); }
.slider input::-webkit-slider-thumb { appearance: none; width: 29px; height: 10px; background: linear-gradient(90deg, var(--cyan) 13px, var(--cyan-dim) 13px 14px, var(--cyan-lit) 14px 15px, var(--cyan) 15px); border: 1px solid; border-color: var(--cyan-lit) var(--cyan-dim) var(--cyan-dim) var(--cyan-lit); }
.sash { height: 6px; flex: none; border-bottom: 2px solid var(--teal-lit); }
.sash i { display: block; width: 10px; height: 8px; margin: 0 10px 0 auto; background: var(--teal); border: 1px solid; border-color: var(--teal-lit) var(--teal-dim) var(--teal-dim) var(--teal-lit); }
.preview { flex: 1; min-height: 0; margin: 2px 4px 0; display: flex; align-items: center; justify-content: center; border: 2px solid; border-color: var(--teal-dim) var(--teal-lit) var(--teal-lit) var(--teal-dim); outline: 1px solid #000; outline-offset: -3px; }
.hist-foot { height: 46px; flex: none; display: flex; gap: 4px; padding: 2px 6px 3px 5px; }
.hist-foot .ib { height: 38px; }
.hist-foot .ib.big { width: 38px; }
.hist-foot .ib.big svg { width: 30px; height: 30px; }
.count { flex: 1; margin: -1px 0; padding-left: 2px; background: var(--cyan); border: 1px solid #000; line-height: 40px; white-space: nowrap; }

/* measure popup */
.popup { left: 1856px; top: 245px; width: 184px; height: 253px; }
.popup h3 { height: 17px; flex: none; text-align: center; background: var(--cyan); line-height: 17px; border-bottom: 1px solid #000; }
.modes { flex: 1; }
.modes label { display: flex; align-items: center; height: 29px; gap: 5px; padding-left: 8px; background: var(--cyan); border: 1px solid #000; white-space: nowrap; }

/* pieces left behind by another window */
.ghost { position: absolute; left: 110px; top: 655px; width: 8px; height: 383px; background: #000; display: flex; flex-direction: column; gap: 3px; font-size: 12px; }
.ghost b { height: 18px; background: #fec84e; border-bottom: 1px solid var(--teal-dim); }
.ghost span { height: 34px; line-height: 34px; background: var(--cream); }
.ghost i { height: 24px; background: #b4ffff; }

/* taskbar */
.taskbar { height: 40px; flex: none; display: flex; align-items: center; background: #101010; color: #fff; font: 12px/18px var(--ui); }
.start { width: 51px; height: 40px; flex: none; display: flex; align-items: center; justify-content: center; padding-right: 3px; }
.tasks { display: flex; flex: 1; min-width: 0; }
.task { width: 84px; height: 40px; flex: none; display: flex; align-items: center; gap: 4px; padding-left: 8px; background: linear-gradient(#a8d8f4, #a8d8f4) 4px 38px / 76px 2px no-repeat; white-space: nowrap; text-align: left; }
.task svg { width: 23px; height: 23px; flex: none; }
.task.active { background-color: #353535; background-position: 0 38px; background-size: 84px 2px; }
.tray { display: flex; align-items: center; gap: 11px; padding-right: 8px; }
.tray time { display: flex; flex-direction: column; align-items: center; width: 62px; margin-left: 7px; }
.tray time + svg { margin: 0 4px; }
.badge { font: 11px var(--ui); fill: #fff; text-anchor: middle; }
```
FILE: script.js
```javascript
const groups = [
    [
        ['to', 'white'], ['ts', 'mask'], ['cs', 'signal'], ['pln2t', 'plane'], ['sig3b', 'signal'],
        ['pln4t', 'plane'], ['sig5b', 'signal'], ['sig6t', 'signal'], ['sig7b', 'signal'], ['pln8t', 'plane'],
        ['sig9b', 'signal'], ['sig10t', 'signal'], ['pln11b', 'plane'], ['sig12t', 'signal'], ['pln13b', 'plane'],
        ['ss', 'signal'], ['bs', 'mask'], ['bo', 'white']
    ],
    [
        ['drl', 'drill'], ['szdrl', 'drill'], ['laser1-2', 'drill'], ['szdrl1-7', 'drill'],
        ['szdrl8-14', 'drill'], ['rout', 'rout']
    ],
    ['tp', 'bp', 'npth', 'solt1', 'dkst', 'dksb', 'dk1-7t', 'dk1-7b', 'dk8-14t', 'dk8-14b', 'ydkdrl',
        'biaozhu', 'datecode-ph', 'fz1-7t', 'fz6-7b', 'fz8-14b', 'fz8-9t', 'd', 'd1-7', 'd8-14', 'to.d',
        'ts.d', 'cs.d', 'pln2t.d', 'sig3b.d', 'pln4t.d', 'sig5b.d', 'sig6t.d', 'sig7b.d'
    ].map(name => [name, 'misc'])
];
const hand = '<svg><use href="#i-hand"/></svg>';

document.getElementById('layers').innerHTML = groups.map((rows, g) =>
    '<div class="group">' + rows.map(([name, kind]) => {
        const current = name === 'sig7b';
        const marked = g === 0 || name === 'tp' || name === 'bp';
        return `<label class="layer"><input type="checkbox"${current ? ' checked' : ''}>
            <span class="swatch"${current ? ' style="background:#f00"' : ''}></span>
            <span class="name ${kind}">${name}${marked ? hand : ''}${current ? '<span class="grid">⊞</span>' : ''}</span></label>`;
    }).join('') + '</div>'
).join('');

// value, bar height, range start, range end
const bins = [
    ['2.896', 44, '2.8-', '2.9'],
    ['3.05', 46, '3-', '3.1'],
    ['3.1', 47, '3.1-', '3.2'],
    ['3.2', 49, '3.2-', '3.3'],
    ['3.346', 51, '3.3-', '3.4'],
    ['3.4', 52, '3.4-', '3.5']
];
document.getElementById('bars').innerHTML = bins.map((b, n) =>
    `<div class="bar${n ? '' : ' low'}">${b[0]}<i style="height:${b[1]}px"></i></div>`).join('');
document.getElementById('bins').innerHTML = bins.map(b => `<span>${b[2]}<b>${b[3]}</b></span>`).join('');

const tasks = [
    ['ding', '钉钉'], ['disk', 'Admi...'], ['fox', 'Foxm...'], ['shell', '兴森...'], ['eds', 'EDS...'],
    ['gen', 'Gene...'], ['x', 'Engin...'], ['x', 'Progr...'], ['x', 'cam ...'], ['x', 'Grap...'],
    ['x', 'Dialo...'], ['x', 'Grap...'], ['x', 'Dialo...'], ['calc', '计算器'], ['note', '制作...'],
    ['xls', 'EV00...'], ['xls', 'EV00...'], ['xls', 'EQ1-...'], ['xls', '副本E...'], ['doc', '2014...'],
    ['gen', 'CAM_...']
];
document.getElementById('tasks').innerHTML = tasks.map(([icon, title], n) =>
    `<button class="task${n === 11 ? ' active' : ''}"><svg><use href="#t-${icon}"/></svg>${title}</button>`).join('');
```
